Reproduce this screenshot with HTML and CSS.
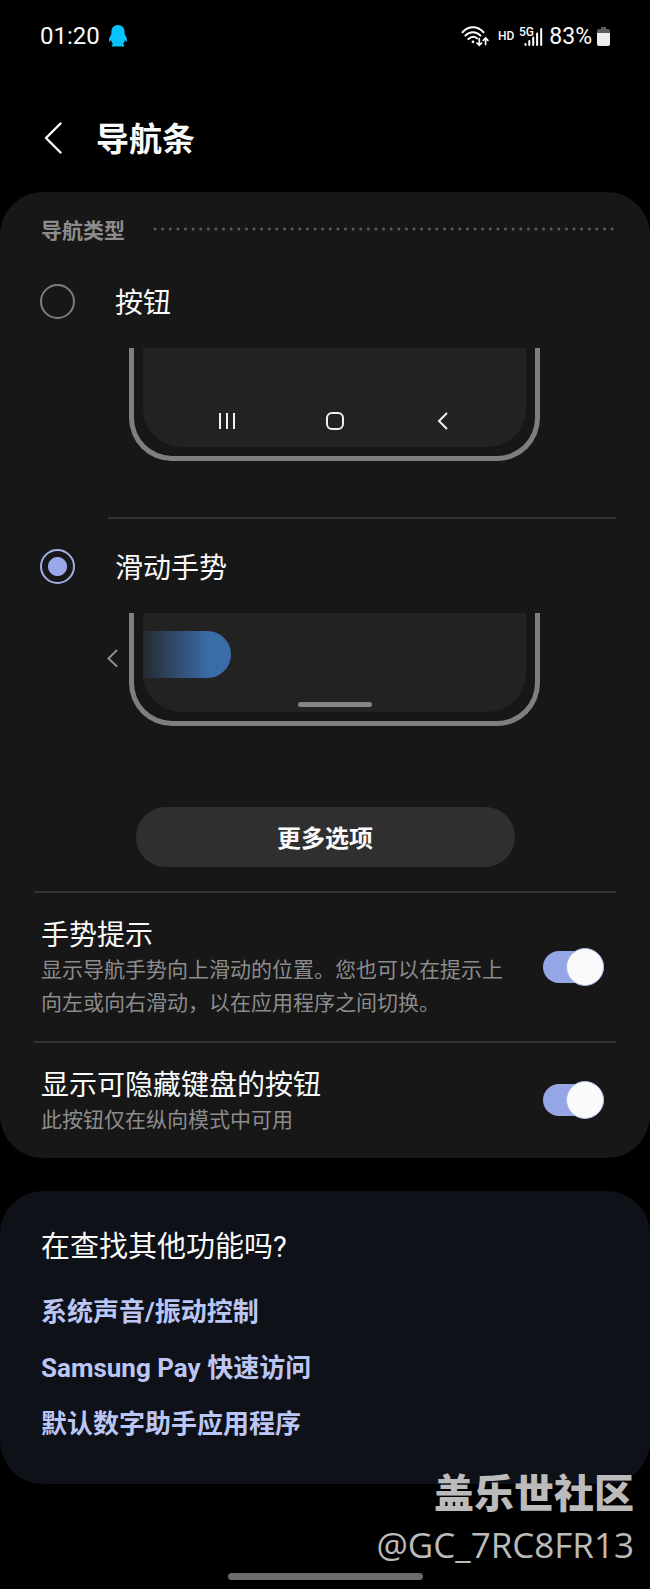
FILE: index.html
```html
<!DOCTYPE html>
<html lang="zh-CN">
	<head>
		<meta charset="utf-8">
		<meta name="viewport" content="width=device-width, initial-scale=1">
		<title>导航条</title>
		<link rel="stylesheet" href="styles.css">
	</head>

	<body>
		<div class="status-bar">
			<span>01:20</span>
			<svg class="penguin" width="20" height="22" viewBox="0 0 20 22">
				<path fill="#06c3fb" d="M10 0C5.800 0 3.400 3 3.400 7.400L3.300 9.600C1.600 11.800 .6 14.500 1.100 16.300C1.500 17 2.400 16 3 15C3.300 16.600 4.100 17.900 5 18.900C3.700 19.500 3.200 20.700 4.200 21.600H15.800C16.800 20.700 16.300 19.500 15 18.900C15.900 17.900 16.700 16.600 17 15C17.600 16 18.500 17 18.900 16.300C19.400 14.500 18.400 11.800 16.700 9.600L16.600 7.400C16.600 3 14.200 0 10 0Z"/>
			</svg>
			<div class="status-right">
				<svg width="28" height="21" viewBox="0 0 28 21" fill="none" stroke="#fff" stroke-width="2" stroke-linecap="round">
					<path d="M1.500 6.200C7.500 -.3 16.500 -.3 22.500 6.200M4.300 9.600C8.800 5.200 15 5.200 19.500 9.600M7.400 13C10.300 10.200 13.600 10.200 16.200 12.400"/>
					<circle cx="12" cy="15.800" r="1.400" fill="#fff" stroke="none"/>
					<path stroke-width="1.700" d="M18.300 12.500V19M16 17L18.300 19.300L20.600 17M24.600 18.500V12.300M22.300 14.300L24.600 12L26.900 14.300"/>
				</svg>
				<span class="hd">HD</span>
				<svg class="signal" width="24" height="21" viewBox="0 0 24 21">
					<text x="0" y="10">5G</text>
					<path stroke="#fff" stroke-width="2" stroke-linecap="round" d="M6.500 18V19M10.300 15V19M14.200 11.500V19M18.100 7.500V19M22.200 3V19"/>
				</svg>
				<span class="percent">83%</span>
				<svg width="13" height="19" viewBox="0 0 13 19">
					<path fill="#5d5d5d" d="M4 0H9V2H11Q13 2 13 4V7H0V4Q0 2 2 2H4Z"/>
					<path fill="#eee" d="M0 6H13V17Q13 19 11 19H2Q0 19 0 17Z"/>
				</svg>
			</div>
		</div>

		<header class="header">
			<button type="button" class="back" aria-label="返回">
				<svg width="18" height="32" viewBox="0 0 18 32" fill="none" stroke="#fff" stroke-width="2.400" stroke-linecap="round" stroke-linejoin="round">
					<path d="M16.500 1.500L2 16L16.500 30.500"/>
				</svg>
			</button>
			<h1>导航条</h1>
		</header>

		<main>
			<section class="card">
				<div class="subheader">
					<h2>导航类型</h2>
					<svg class="dots" height="4">
						<line x1="2" y1="2" x2="99.600%" y2="2" pathLength="60" stroke-dasharray="0 1"/>
					</svg>
				</div>

				<label class="option">
					<input type="radio" name="navtype">
					<span>按钮</span>
				</label>
				<div class="preview">
					<span class="swipe-arrow"></span>
					<div class="phone">
						<div class="screen nav-buttons">
							<svg width="18" height="18" viewBox="0 0 18 18" stroke="#f0f0f0" stroke-width="2">
								<path d="M2 1V17M9 1V17M16 1V17"/>
							</svg>
							<svg width="18" height="18" viewBox="0 0 18 18" fill="none" stroke="#f0f0f0" stroke-width="2">
								<rect x="1" y="1" width="16" height="16" rx="5"/>
							</svg>
							<svg width="18" height="18" viewBox="0 0 18 18" fill="none" stroke="#f0f0f0" stroke-width="2">
								<path d="M13 1L5 9L13 17"/>
							</svg>
						</div>
					</div>
				</div>
				<hr>

				<label class="option">
					<input type="radio" name="navtype" checked>
					<span>滑动手势</span>
				</label>
				<div class="preview">
					<svg class="swipe-arrow" height="18" viewBox="0 0 11 18" fill="none" stroke="#8f8f8f" stroke-width="2" stroke-linecap="round">
						<path d="M9.500 1.500L1.500 9.500L9.500 17"/>
					</svg>
					<div class="phone">
						<div class="screen gestures">
							<div class="swipe"></div>
							<div class="handle"></div>
						</div>
					</div>
				</div>

				<button type="button" class="more">更多选项</button>

				<label class="row">
					<span class="row-text">
						<span class="row-title">手势提示</span>
						<span class="row-desc">显示导航手势向上滑动的位置。您也可以在提示上向左或向右滑动，以在应用程序之间切换。</span>
					</span>
					<input type="checkbox" role="switch" class="switch" checked>
				</label>
				<label class="row">
					<span class="row-text">
						<span class="row-title">显示可隐藏键盘的按钮</span>
						<span class="row-desc">此按钮仅在纵向模式中可用</span>
					</span>
					<input type="checkbox" role="switch" class="switch" checked>
				</label>
			</section>

			<section class="card related">
				<h2>在查找其他功能吗?</h2>
				<a href="#">系统声音/振动控制</a>
				<a href="#">Samsung Pay 快速访问</a>
				<a href="#">默认数字助手应用程序</a>
			</section>
		</main>

		<div class="home-bar"></div>

		<div class="watermark">
			<div class="community">盖乐世社区</div>
			<div class="user">@GC_7RC8FR13</div>
		</div>
	</body>
</html>
```
FILE: styles.css
```css
* {
	box-sizing: border-box;
}

body {
	position: relative;
	margin: 0;
	background: #000;
	color: #fafafa;
	font-family: Roboto, "Noto Sans CJK SC", sans-serif;
}

h1, h2 {
	margin: 0;
}

button {
	border: 0;
	color: inherit;
	font-family: inherit;
}

/* status bar */
.status-bar {
	display: flex;
	align-items: center;
	height: 72px;
	padding: 0 40px;
	font-size: 24px;
}

.penguin {
	margin-left: 8px;
}

.status-right {
	display: flex;
	align-items: center;
	margin-left: auto;
}

.hd {
	margin: 0 5px 0 9px;
	font-size: 12px;
	font-weight: 500;
}

.signal text {
	fill: #fff;
	font-size: 12px;
	font-weight: 500;
}

.percent {
	margin: 0 5px 0 6px;
	font-size: 23px;
}

.header {
	display: flex;
	align-items: center;
	height: 120px;
	padding: 12px 44px 0;
}

.back {
	display: flex;
	padding: 0;
	background: none;
}

.header h1 {
	margin-left: 34px;
	padding-bottom: 2px;
	font-size: 33px;
	font-weight: 700;
}

/* cards */
.card {
	overflow: hidden;
	border-radius: 43px;
	background: #171717;
}

.subheader {
	display: flex;
	align-items: center;
	gap: 28px;
	height: 76px;
	padding: 0 36px 2px 41px;
}

.subheader h2 {
	color: #8c8c8c;
	font-size: 21px;
	font-weight: 700;
}

.dots {
	flex: 1;
	min-width: 0;
	stroke: #5c5c5c;
	stroke-width: 3;
	stroke-linecap: round;
}

.option {
	display: flex;
	align-items: center;
	gap: 40px;
	height: 66px;
	padding-left: 40px;
	font-size: 28px;
}

.option input {
	flex: none;
	width: 35px;
	height: 35px;
	margin: 0;
	appearance: none;
	border: 2px solid #7d7d7d;
	border-radius: 50%;
}

.option input:checked {
	border-color: #a3b0e6;
	background: radial-gradient(circle, #99a8e8 9px, transparent 10px);
}

/* lower part of a phone, under each option */
.preview {
	display: flex;
	gap: 11px;
	margin-top: 14px;
	padding: 0 34px 0 107px;
}

.swipe-arrow {
	flex: none;
	width: 11px;
	margin-top: 36px;
}

.phone {
	flex: 0 1 411px;
	padding: 0 9px 9px;
	border: 5px solid #7f7f7f;
	border-top: 0;
	border-radius: 0 0 43px 43px;
}

.screen {
	height: 99px;
	border-radius: 0 0 38px 38px;
	background: #222;
}

.nav-buttons {
	display: grid;
	grid-template-columns: repeat(3, 108px);
	justify-content: center;
	justify-items: center;
	align-items: end;
	padding-bottom: 17px;
}

.gestures {
	display: flex;
	flex-direction: column;
	justify-content: space-between;
	padding: 18px 0 5px;
}

.swipe {
	width: 88px;
	height: 47px;
	border-radius: 0 24px 24px 0;
	background: linear-gradient(to right, #262a30, #3a6ca8 75%);
}

.handle {
	align-self: center;
	width: 74px;
	height: 5px;
	border-radius: 3px;
	background: #858585;
}

hr {
	height: 2px;
	margin: 56px 34px 14px 108px;
	border: 0;
	background: #333;
}

.more {
	display: block;
	width: 379px;
	height: 60px;
	margin: 81px auto 24px;
	padding: 0 0 2px;
	border-radius: 30px;
	background: #2f2f2f;
	font-size: 24px;
	font-weight: 700;
}

/* switch rows */
.row {
	display: flex;
	align-items: center;
	justify-content: space-between;
	gap: 32px;
	margin: 0 34px;
	padding: 20px 12px 21px 7px;
	border-top: 2px solid #333;
}

.row-text {
	padding-top: 5px;
}

.row-title,
.row-desc {
	display: block;
}

.row-title {
	font-size: 28px;
	line-height: 36px;
}

.row-desc {
	color: #8c8c8c;
	font-size: 21px;
	line-height: 33px;
}

.switch {
	display: flex;
	flex: none;
	align-items: center;
	justify-content: flex-end;
	width: 61px;
	height: 32px;
	margin: 0;
	appearance: none;
	border-radius: 16px;
	background: #95a6e6;
}

.switch::before {
	content: "";
	flex: none;
	width: 36px;
	height: 36px;
	border: 1px solid #a9b6ea;
	border-radius: 50%;
	background: #fafafa;
}

.related {
	display: flex;
	flex-direction: column;
	align-items: flex-start;
	margin-top: 33px;
	padding: 36px 41px 32px;
	background: #0e1118;
}

.related h2 {
	margin-bottom: 17px;
	font-size: 29px;
	font-weight: 400;
	line-height: 40px;
}

.related a {
	color: #bcc6f4;
	font-size: 26px;
	font-weight: 700;
	line-height: 56px;
	text-decoration: none;
}

.home-bar {
	width: 30%;
	height: 7px;
	margin: 89px auto 9px;
	border-radius: 4px;
	background: #6b6b6b;
}

.watermark {
	position: absolute;
	right: 16px;
	bottom: 20px;
	color: #bbb;
	text-align: right;
}

.community {
	font-size: 40px;
	font-weight: 900;
	line-height: 52px;
}

.user {
	font-family: "Open Sans", sans-serif;
	font-size: 35px;
	line-height: 48px;
}
```
